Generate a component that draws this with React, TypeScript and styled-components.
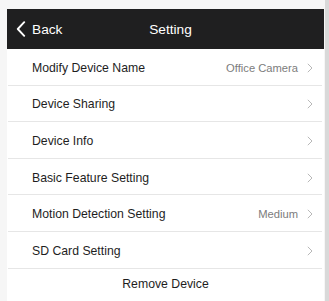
import React from 'react';
import styled, { createGlobalStyle } from 'styled-components';

type Item = {
  label: string;
  value?: string;
};

const items: Item[] = [
  { label: 'Modify Device Name', value: 'Office Camera' },
  { label: 'Device Sharing' },
  { label: 'Device Info' },
  { label: 'Basic Feature Setting' },
  { label: 'Motion Detection Setting', value: 'Medium' },
  { label: 'SD Card Setting' },
];

const App = () => {
  return (
    <>
      <GlobalStyle />
      <Page>
        <Screen>
          <Header>
            <BackButton>
              <svg width="10" height="16" viewBox="0 0 10 16">
                <path d="M8.2 1.2 L1.8 8 L8.2 14.8" fill="none" stroke="#fff" strokeWidth="1.9" strokeLinecap="round" strokeLinejoin="round" />
              </svg>
              <span>Back</span>
            </BackButton>
            <Title>Setting</Title>
          </Header>
          <List>
            {items.map((item) => (
              <Row key={item.label}>
                <Label>{item.label}</Label>
                {item.value && <Value>{item.value}</Value>}
                <Chevron />
              </Row>
            ))}
            <RemoveRow>Remove Device</RemoveRow>
          </List>
        </Screen>
        <ScrollEdge />
      </Page>
    </>
  );
};

export default App;

const Chevron = () => (
  <ChevronIcon width="6" height="10" viewBox="0 0 6 10">
    <path d="M0.8 0.8 L5 5 L0.8 9.2" fill="none" stroke="#b8b8b8" strokeWidth="1" />
  </ChevronIcon>
);

const GlobalStyle = createGlobalStyle`
  html, body {
    margin: 0;
    padding: 0;
    background: #f6f6f6;
    font-family: "Liberation Sans", Arial, sans-serif;
  }
`;

const Page = styled.div`
  display: flex;
  width: 329px;
  height: 301px;
  overflow: hidden;
  padding-top: 9px;
  box-sizing: border-box;
`;

const Screen = styled.div`
  display: flex;
  flex-direction: column;
  width: 318px;
  margin-left: 7px;
  background: #fff;
  overflow: hidden;

  & > * {
    flex-shrink: 0;
  }
`;

const ScrollEdge = styled.div`
  width: 4px;
  margin-top: -9px;
  margin-left: 1px;
  background: #d9d9d9;
`;

const Header = styled.div`
  position: relative;
  display: flex;
  align-items: center;
  justify-content: center;
  height: 40px;
  background: #1f1f20;
  color: #fff;
`;

const BackButton = styled.div`
  position: absolute;
  left: 9px;
  top: 0;
  bottom: 0;
  display: flex;
  align-items: center;
  gap: 6px;
  font-size: 13.7px;
`;

const Title = styled.div`
  font-size: 13.7px;
  margin-left: 10px;
`;

const List = styled.div`
  display: flex;
  flex-direction: column;
`;

const Row = styled.div`
  display: flex;
  flex-shrink: 0;
  align-items: center;
  height: 35.6px;
  margin-left: 1px;
  margin-right: 2px;
  padding: 0 9px 0 24px;
  border-bottom: 1px solid #e6e6e6;
  font-size: 12.25px;
  color: #1e1e1e;
`;

const Label = styled.span`
  flex: 1;
  padding-top: 2px;
`;

const Value = styled.span`
  color: #7c7c7c;
  font-size: 11.2px;
  margin-right: 9px;
  padding-top: 2px;
`;

const ChevronIcon = styled.svg`
  display: block;
  margin-top: 2px;
`;

const RemoveRow = styled.div`
  display: flex;
  align-items: center;
  justify-content: center;
  height: 30px;
  font-size: 12.25px;
  color: #1e1e1e;
`;
